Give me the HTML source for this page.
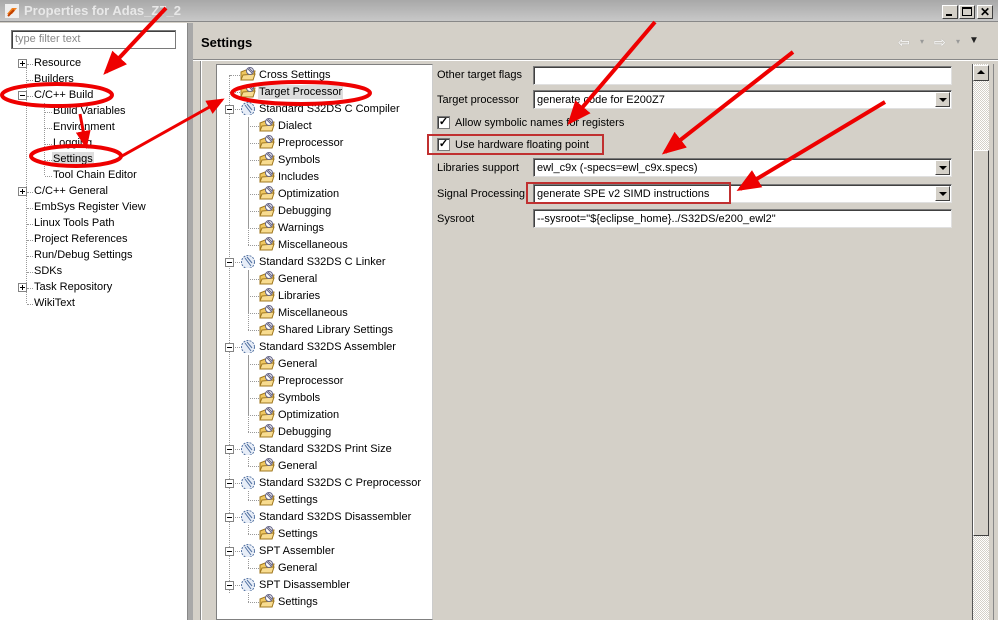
<!DOCTYPE html>
<html><head><style>
*{margin:0;padding:0;box-sizing:border-box}
body{width:998px;height:620px;overflow:hidden;background:#d4d0c8;font-family:"Liberation Sans",sans-serif;font-size:11px;color:#000;position:relative}
.a{position:absolute;white-space:nowrap}
.t{position:absolute;white-space:nowrap;line-height:14px}
.exp{position:absolute;width:9px;height:9px;border:1px solid #848484;background:#fff}
.exp:before{content:"";position:absolute;left:1px;top:3px;width:5px;height:1px;background:#000}
.exp.p:after{content:"";position:absolute;left:3px;top:1px;width:1px;height:5px;background:#000}
.inp{position:absolute;background:#fff;border:1px solid #7a7a7a;border-right-color:#e0e0e0;border-bottom-color:#e0e0e0;box-shadow:inset 1px 1px 0 #404040;height:19px;padding:3px 0 0 3px;white-space:nowrap}
.dd{position:absolute;right:1px;top:1px;width:15px;height:15px;background:#d4d0c8;border:1px solid;border-color:#fff #404040 #404040 #fff}
.dd:after{content:"";position:absolute;left:3px;top:5px;border-left:4px solid transparent;border-right:4px solid transparent;border-top:4px solid #000}
.cb{position:absolute;width:13px;height:13px;background:#fff;border:1px solid #7a7a7a;box-shadow:inset 1px 1px 0 #404040;font-size:11px;line-height:11px;text-align:center;font-weight:bold}
.fold{position:absolute;width:16px;height:14px}
</style></head><body>
<div class="a" style="left:0;top:0;width:998px;height:22px;background:linear-gradient(#a8a8a8,#c8c8c8);border-bottom:1px solid #888"></div>
<div class="a" style="left:5px;top:4px;width:14px;height:14px;background:#eee"><svg width="14" height="14"><path d="M2 10 L7 4 L12 4 L7 10Z" fill="#f08020"/><path d="M3 12 L9 6" stroke="#c04000" stroke-width="2"/></svg></div>
<div class="a" style="left:24px;top:3px;font-size:13px;font-weight:bold;color:#e8e8e8">Properties for Adas_Z7_2</div>
<div class="a" style="left:942px;top:5px;width:16px;height:14px;background:#d4d0c8;border:1px solid #404040;border-top-color:#fff;border-left-color:#fff"><div style="position:absolute;left:3px;top:8px;width:6px;height:2px;background:#000"></div></div>
<div class="a" style="left:959px;top:5px;width:16px;height:14px;background:#d4d0c8;border:1px solid #404040;border-top-color:#fff;border-left-color:#fff"><div style="position:absolute;left:2px;top:1px;width:10px;height:9px;border:1px solid #000;border-top-width:2px"></div></div>
<div class="a" style="left:977px;top:5px;width:16px;height:14px;background:#d4d0c8;border:1px solid #404040;border-top-color:#fff;border-left-color:#fff;font-size:12px;font-weight:bold;line-height:12px;text-align:center">✕</div>

<div class="a" style="left:0;top:23px;width:188px;height:597px;background:#fff;border-right:1px solid #888"></div>
<div class="a" style="left:11px;top:30px;width:165px;height:19px;border:1px solid #7a7a7a;box-shadow:inset 1px 1px 0 #404040;background:#fff;color:#888;padding:2px 3px">type filter text</div>
<div class="a" style="left:188px;top:23px;width:5px;height:597px;background:#a8a8a8"></div>
<div class="a" style="left:200px;top:60px;width:1px;height:560px;background:#888"></div>
<div class="a" style="left:201px;top:60px;width:1px;height:560px;background:#fff"></div>
<div class="a" style="left:26px;top:67px;height:236px;border-left:1px dotted #999"></div>
<div class="a" style="left:44px;top:103px;height:72px;border-left:1px dotted #999"></div>
<div id="lt"></div>

<div class="a" style="left:201px;top:35px;font-size:13px;font-weight:bold">Settings</div>
<div class="a" style="left:193px;top:59px;width:805px;height:1px;background:#888"></div>
<div class="a" style="left:193px;top:60px;width:805px;height:1px;background:#fff"></div>
<div class="a" style="left:898px;top:34px;color:#fff;font-size:14px;text-shadow:0 0 1px #999">⇦</div>
<div class="a" style="left:920px;top:37px;color:#999;font-size:8px">▾</div>
<div class="a" style="left:934px;top:34px;color:#fff;font-size:14px;text-shadow:0 0 1px #999">⇨</div>
<div class="a" style="left:956px;top:37px;color:#999;font-size:8px">▾</div>
<div class="a" style="left:969px;top:35px;font-size:10px;color:#222">▼</div>

<div class="a" style="left:216px;top:64px;width:217px;height:556px;background:#fff;border:1px solid #808080;border-right-color:#ccc"></div>
<div class="a" style="left:229px;top:75px;height:518px;border-left:1px dotted #999"></div>
<div id="rt"></div>

<div class="t" style="left:437px;top:68px">Other target flags</div>
<div class="inp" style="left:533px;top:66px;width:419px"></div>
<div class="t" style="left:437px;top:93px">Target processor</div>
<div class="inp" style="left:533px;top:90px;width:419px">generate code for E200Z7<div class="dd"></div></div>
<div class="cb" style="left:437px;top:116px">✓</div>
<div class="t" style="left:455px;top:116px">Allow symbolic names for registers</div>
<div class="cb" style="left:437px;top:138px">✓</div>
<div class="t" style="left:455px;top:138px">Use hardware floating point</div>
<div class="t" style="left:437px;top:161px">Libraries support</div>
<div class="inp" style="left:533px;top:158px;width:419px">ewl_c9x (-specs=ewl_c9x.specs)<div class="dd"></div></div>
<div class="t" style="left:437px;top:187px">Signal Processing</div>
<div class="inp" style="left:533px;top:184px;width:419px">generate SPE v2 SIMD instructions<div class="dd"></div></div>
<div class="t" style="left:437px;top:212px">Sysroot</div>
<div class="inp" style="left:533px;top:209px;width:419px">--sysroot="${eclipse_home}../S32DS/e200_ewl2"</div>

<div class="a" style="left:972px;top:64px;width:17px;height:556px;background:repeating-conic-gradient(#d4d0c8 0 25%,#fff 0 50%) 0 0/2px 2px;border-left:1px solid #555"></div>
<div class="a" style="left:973px;top:65px;width:16px;height:16px;background:#d4d0c8;border:1px solid;border-color:#fff #404040 #404040 #fff"><div style="position:absolute;left:3px;top:4px;border-left:4px solid transparent;border-right:4px solid transparent;border-bottom:4px solid #000"></div></div>
<div class="a" style="left:973px;top:150px;width:16px;height:386px;background:#d4d0c8;border:1px solid;border-color:#fff #404040 #404040 #fff"></div>
<div class="a" style="left:993px;top:64px;width:1px;height:556px;background:#888"></div>

<svg class="a" style="left:0;top:0" width="998" height="620">
<defs><marker id="ar" markerWidth="6" markerHeight="5" refX="5" refY="2.5" orient="auto"><path d="M0 0L6 2.5L0 5Z" fill="#e00"/></marker></defs>
<g stroke="#e00" stroke-width="4" fill="none">
<line x1="166" y1="8" x2="106" y2="72" marker-end="url(#ar)"/>
<ellipse cx="57" cy="95" rx="55" ry="11"/>
<line x1="80" y1="114" x2="86" y2="146" stroke-width="3" marker-end="url(#ar)"/>
<ellipse cx="76" cy="156" rx="45" ry="10"/>
<line x1="122" y1="156" x2="222" y2="100" stroke-width="3" marker-end="url(#ar)"/>
<ellipse cx="301" cy="93" rx="69" ry="11"/>
<line x1="655" y1="22" x2="570" y2="122" marker-end="url(#ar)"/>
<line x1="793" y1="52" x2="665" y2="152" marker-end="url(#ar)"/>
<line x1="885" y1="102" x2="740" y2="189" marker-end="url(#ar)"/>
</g>
<g stroke="#c03030" stroke-width="2" fill="none">
<rect x="428" y="135" width="175" height="19"/>
<rect x="527" y="183" width="203" height="20"/>
</g>
</svg>

<script>
function fold(x,y){return '<svg class="fold" style="left:'+x+'px;top:'+y+'px" width="16" height="14"><path d="M1 5 L6 3 L15 4 L13 13 L1 13Z" fill="#f0c860" stroke="#a07820"/><path d="M3 8 L15 7 L13 13 L1 13Z" fill="#f8dc90" stroke="#a07820"/><circle cx="10" cy="4" r="3.5" fill="#fff" stroke="#668"/><path d="M8 2 L12 6 M9 1 L13 5" stroke="#668"/></svg>';}
function gear(x,y){return '<svg class="fold" style="left:'+x+'px;top:'+y+'px" width="16" height="16"><circle cx="8" cy="8" r="6.5" fill="#e8eef8" stroke="#5070a0" stroke-dasharray="2 1.2"/><path d="M5 4 L11 12 M7 3 L12 9" stroke="#5070a0"/></svg>';}
var L=[[0,'Resource',63,'p'],[0,'Builders',79],[0,'C/C++ Build',95,'m'],[1,'Build Variables',111],[1,'Environment',127],[1,'Logging',143],[1,'Settings',159,'s'],[1,'Tool Chain Editor',175],[0,'C/C++ General',191,'p'],[0,'EmbSys Register View',207],[0,'Linux Tools Path',223],[0,'Project References',239],[0,'Run/Debug Settings',255],[0,'SDKs',271],[0,'Task Repository',287,'p'],[0,'WikiText',303]];
var h='';
L.forEach(function(r){var x=r[0]?53:34,y=r[2];
h+='<div class="a" style="left:'+(r[0]?45:27)+'px;top:'+(y+1)+'px;width:'+(r[0]?7:6)+'px;border-top:1px dotted #999"></div>';
if(r[3]=='p'||r[3]=='m')h+='<div class="exp '+(r[3]=='p'?'p':'')+'" style="left:18px;top:'+(y-4)+'px"></div>';
h+='<div class="t" style="left:'+(x-1)+'px;top:'+(y-7)+'px;padding:0 1px;'+(r[3]=='s'?'background:#ddd':'')+'">'+r[1]+'</div>';});
document.getElementById('lt').innerHTML=h;
var R=[[0,'Cross Settings'],[0,'Target Processor','s'],[2,'Standard S32DS C Compiler'],[1,'Dialect'],[1,'Preprocessor'],[1,'Symbols'],[1,'Includes'],[1,'Optimization'],[1,'Debugging'],[1,'Warnings'],[1,'Miscellaneous'],[2,'Standard S32DS C Linker'],[1,'General'],[1,'Libraries'],[1,'Miscellaneous'],[1,'Shared Library Settings'],[2,'Standard S32DS Assembler'],[1,'General'],[1,'Preprocessor'],[1,'Symbols'],[1,'Optimization'],[1,'Debugging'],[2,'Standard S32DS Print Size'],[1,'General'],[2,'Standard S32DS C Preprocessor'],[1,'Settings'],[2,'Standard S32DS Disassembler'],[1,'Settings'],[2,'SPT Assembler'],[1,'General'],[2,'SPT Disassembler'],[1,'Settings']];
h='';var gy=0;
R.forEach(function(r,i){var y=75+i*17;
if(r[0]==2){h+='<div class="exp" style="left:225px;top:'+(y-4)+'px"></div><div class="a" style="left:235px;top:'+y+'px;width:5px;border-top:1px dotted #999"></div>'+gear(240,y-8)+'<div class="t" style="left:259px;top:'+(y-7)+'px">'+r[1]+'</div>';gy=y;}
else if(r[0]==0){h+='<div class="a" style="left:230px;top:'+y+'px;width:10px;border-top:1px dotted #999"></div>'+fold(240,y-8)+'<div class="t" style="left:258px;top:'+(y-7)+'px;padding:0 1px;'+(r[2]=='s'?'background:#ddd':'')+'">'+r[1]+'</div>';}
else{h+='<div class="a" style="left:248px;top:'+(gy+8)+'px;height:'+(y-gy-8)+'px;border-left:1px dotted #999"></div><div class="a" style="left:248px;top:'+y+'px;width:11px;border-top:1px dotted #999"></div>'+fold(259,y-8)+'<div class="t" style="left:278px;top:'+(y-7)+'px">'+r[1]+'</div>';}
});
document.getElementById('rt').innerHTML=h;
</script>
</body></html>
